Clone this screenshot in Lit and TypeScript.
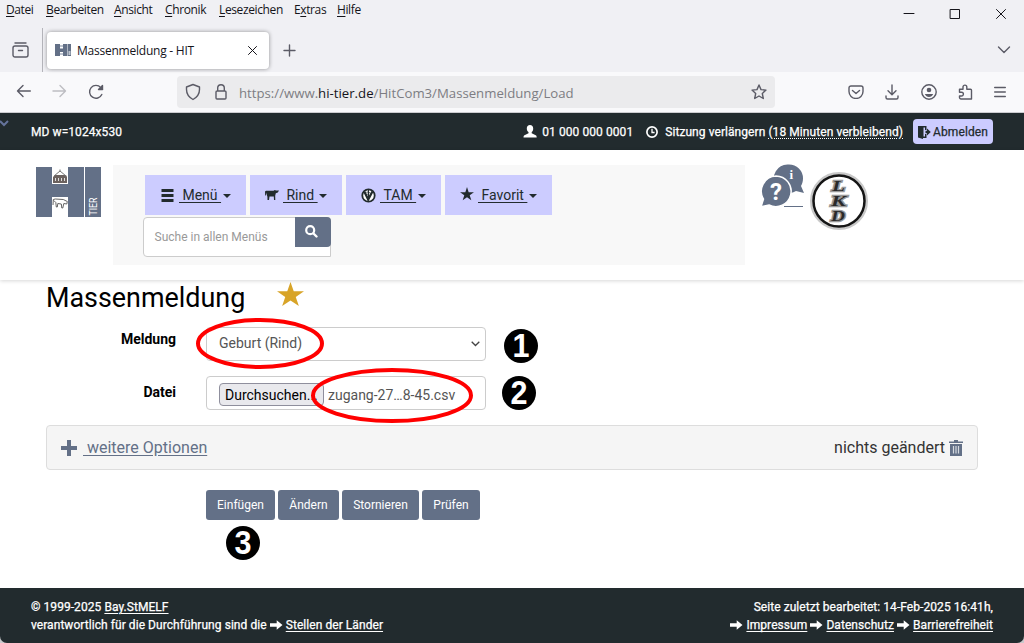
import { LitElement, html, css, svg } from "lit";
import { customElement } from "lit/decorators.js";

const arrow = () => html`<svg class="arrow" width="13" height="10" viewBox="0 0 13 10"><path fill="#fff" d="M0 3.200h6.700V.2L12.500 5 6.700 9.800V6.800H0z" /></svg>`;
const starPath = "M10 0l2.4 7.4H20l-6.1 4.5 2.3 7.3L10 14.700l-6.2 4.500 2.300-7.300L0 7.400h7.600z";

const line = (w: number, h: number, body: unknown, cls = "") =>
  html`<svg class="ln ${cls}" width=${w} height=${h} viewBox="0 0 ${w} ${h}">${body}</svg>`;

@customElement("browser-chrome")
class BrowserChrome extends LitElement {
  static styles = css`
    :host { display: block; font-family: "Open Sans", "Noto Sans", sans-serif; color: #15141a; }
    svg { display: block; flex: none; }
    .ln { fill: none; stroke: #5b5b66; stroke-width: 1.4; stroke-linecap: round; stroke-linejoin: round; }
    .dim { stroke: #bdbdc2; }
    .dark { stroke: #15141a; stroke-width: 1; }
    .top { background: #f0f0f4; height: 72px; display: flex; justify-content: space-between; box-sizing: border-box; }
    .menu { display: flex; height: 22px; padding-left: 6px; font-size: 12px; line-height: 20px; white-space: nowrap; letter-spacing: -0.38px; }
    .menu span { flex: none; }
    .menu b { font-weight: 400; text-decoration: underline; text-underline-offset: 2px; }
    .tabs { display: flex; align-items: center; height: 50px; }
    .recent { margin: 6px 0 0 12px; }
    .sep { width: 1px; height: 44px; margin-left: 13px; align-self: flex-end; background: #b4b4ba; }
    .tab { display: flex; align-items: center; box-sizing: border-box; width: 222px; height: 37px; margin: 6px 0 0 4px; padding: 0 11px 0 8px; background: #fff; border-radius: 4px; box-shadow: 0 0 4px rgba(0, 0, 0, 0.4); font-size: 12px; letter-spacing: -0.23px; }
    .tab span { flex: 1; padding-left: 5px; white-space: nowrap; }
    .plus { margin: 7px 0 0 14px; }
    .win { display: flex; flex-direction: column; align-items: flex-end; padding: 8px 17px 0 0; }
    .ctl { display: flex; gap: 34px; align-items: center; }
    .list { margin: 26px -4px 0 0; }
    .bar { background: #f9f9fb; height: 41px; box-sizing: border-box; border-bottom: 1px solid #ccccd0; display: flex; align-items: center; padding: 0 18px 0 16px; }
    .nav { display: flex; gap: 21px; width: 161px; }
    .url { display: flex; align-items: center; background: #ebebed; border-radius: 4px; width: 598px; height: 32px; box-sizing: border-box; padding: 0 8px; }
    .addr { flex: 1; padding: 1px 0 0 12px; font-size: 13.200px; color: #7d7d83; white-space: nowrap; }
    .addr b { color: #15141a; font-weight: 400; }
    .lock { margin-left: 14px; }
    .tools { display: flex; align-items: center; justify-content: space-between; flex: 1; padding-left: 73px; }
  `;
  render() {
    const items: [string, string, string, number][] = [
      ["", "D", "atei", 40], ["", "B", "earbeiten", 68], ["", "A", "nsicht", 51], ["", "C", "hronik", 54],
      ["", "L", "esezeichen", 75], ["E", "x", "tras", 43], ["", "H", "ilfe", 40],
    ];
    return html`
      <div class="top">
        <div>
          <div class="menu">${items.map((i) => html`<span style="width:${i[3]}px">${i[0]}<b>${i[1]}</b>${i[2]}</span>`)}</div>
          <div class="tabs">
            ${line(17, 16, svg`<path d="M3 1h11M1 6a2 2 0 012-2h11a2 2 0 012 2v7a2 2 0 01-2 2H3a2 2 0 01-2-2zM6.5 8.5h4" />`, "recent")}
            <div class="sep"></div>
            <div class="tab">
              <svg width="17" height="13" viewBox="0 0 17 13"><path fill="#637087" d="M0 0h5v4.500h3V0h4v12H8V8H5v4H0zM12.500 0H16v12h-3.500z" /><path fill="#bcc3ce" d="M5 1h3v2H5zM5 9h3v2H5zM13.500 7h2v4h-2z" /></svg>
              <span>Massenmeldung - HIT</span>
              ${line(11, 11, svg`<path d="M1.500 1.500l8 8m0-8l-8 8" />`, "dark")}
            </div>
            ${line(13, 13, svg`<path d="M6.500 1v11M1 6.500h11" />`, "plus")}
          </div>
        </div>
        <div class="win">
          <div class="ctl">
            ${line(12, 12, svg`<path d="M1 5.500h10" />`, "dark")}
            ${line(12, 12, svg`<path d="M1.500 1.500h9v9h-9z" />`, "dark")}
            ${line(12, 12, svg`<path d="M1.500 1.500l9 9m0-9l-9 9" />`, "dark")}
          </div>
          ${line(14, 8, svg`<path d="M1.500 1l5.500 5.500L12.500 1" />`, "list")}
        </div>
      </div>
      <div class="bar">
        <div class="nav">
          ${line(15, 14, svg`<path d="M14.300 7H1.500M7 1.500L1.500 7 7 12.500" />`)}
          ${line(15, 14, svg`<path d="M1 7h12.500M8 1.500L13.500 7 8 12.500" />`, "dim")}
          ${line(16, 16, svg`<path d="M13.800 10.500A6.400 6.400 0 1112.800 3.600L14.500 5.300" /><path d="M14.500 1.500v4h-4z" fill="#5b5b66" />`)}
        </div>
        <div class="url">
          ${line(16, 18, svg`<path d="M8 1.500L14.500 4v2.500c0 4-2 7.500-6.500 10-4.500-2.500-6.500-6-6.500-10V4z" />`)}
          ${line(12, 16, svg`<path d="M1 8a1 1 0 011-1h8a1 1 0 011 1v6a1 1 0 01-1 1H2a1 1 0 01-1-1zM2.700 7V4a3.300 3.300 0 016.600 0v3" />`, "lock")}
          <div class="addr">https://www.<b>hi-tier.de</b>/HitCom3/Massenmeldung/Load</div>
          ${line(16, 16, svg`<path d="M8 1l2 4.600 5 .5-3.700 3.400 1 5L8 12l-4.300 2.500 1-5L1 6.100l5-.5z" />`)}
        </div>
        <div class="tools">
          ${line(16, 14, svg`<path d="M3 1h10a2 2 0 012 2v3.500a6.500 6.500 0 01-14 0V3a2 2 0 012-2zM4.500 5.500L8 8.500l3.500-3" />`)}
          ${line(14, 16, svg`<path d="M7 1v9.500M3 6.800l4 4 4-4M1 12v1.500A1.500 1.500 0 002.500 15h9a1.500 1.500 0 001.500-1.500V12" />`)}
          ${line(16, 16, svg`<circle cx="8" cy="8" r="7.200" /><circle cx="8" cy="6" r="2.300" fill="#5b5b66" stroke="none" /><path d="M3.800 10h8.400c-.9 2-2.300 3-4.200 3s-3.300-1-4.200-3z" fill="#5b5b66" stroke="none" />`)}
          ${line(15, 16, svg`<path d="M1.500 5.200H5V3a1.900 1.900 0 013.800 0v2.200h3.700a1 1 0 011 1V15H3a1.500 1.500 0 01-1.500-1.500V12h2a1.800 1.800 0 000-3.800h-2z" />`)}
          ${line(12, 12, svg`<path d="M.7 1.500h10.600M.7 6h10.600M.7 10.500h10.600" />`)}
        </div>
      </div>`;
  }
}

@customElement("session-bar")
class SessionBar extends LitElement {
  static styles = css`
    :host { display: flex; height: 37px; background: #222b2e; color: #fff; font: 400 12px/38px Roboto, sans-serif; letter-spacing: 0.07px; -webkit-text-stroke: 0.25px; padding-right: 31px; white-space: nowrap; }
    svg { display: block; flex: none; }
    .tog { margin: 7px 22px 0 0; }
    .size { flex: 1; }
    .user { display: flex; align-items: center; gap: 5px; margin-right: 13px; }
    .time { display: flex; align-items: center; gap: 7px; margin-right: 10px; }
    .dot { text-decoration: underline dotted; text-underline-offset: 2px; }
    .out { display: flex; align-items: center; gap: 2px; box-sizing: border-box; width: 80px; height: 25px; margin-top: 6px; padding: 1px 0 0 5px; background: #ccf; border-radius: 4px; color: #222b2e; line-height: 24px; letter-spacing: 0.12px; }
  `;
  render() {
    return html`
      <svg class="tog" width="9" height="7" viewBox="0 0 9 7"><path d="M0 1l4 4 4-4" fill="none" stroke="#65739b" stroke-width="2" /></svg>
      <span class="size">MD w=1024x530</span>
      <span class="user"><svg width="14" height="13" viewBox="0 0 14 13"><path fill="#fff" d="M7 0c2 0 3.200 1.400 3.200 3.500 0 1.600-.6 2.900-1.500 3.600v1.200l4 1.900c.7.400 1 1 1 2.300H.5c0-1.300.3-1.900 1-2.300l4-1.900V7.100C4.500 6.400 3.800 5.100 3.800 3.500 3.800 1.400 5 0 7 0z" /></svg>01 000 000 0001</span>
      <span class="time"><svg width="12" height="12" viewBox="0 0 12 12"><circle cx="6" cy="6" r="5.100" fill="none" stroke="#fff" stroke-width="1.700" /><path d="M6 2.800V6.500h2.600" fill="none" stroke="#fff" stroke-width="1.300" /></svg><span>Sitzung verlängern <span class="dot">(18 Minuten verbleibend)</span></span></span>
      <span class="out"><svg width="13" height="13" viewBox="0 0 13 13"><path fill="#222b2e" d="M0 0h8.500v4H7V1.500H5.500v9H7V8h1.500v4H5v1L0 11.500zM7.500 4.800H9V2.500L12.800 6 9 9.500V7.200H7.500z" /></svg>Abmelden</span>`;
  }
}

@customElement("site-header")
class SiteHeader extends LitElement {
  static styles = css`
    :host { display: flex; height: 130px; box-sizing: border-box; padding: 15px 0 0 36px; background: #fff; box-shadow: 0 1px 4px rgba(0, 0, 0, 0.16); font-family: Roboto, sans-serif; z-index: 1; }
    svg { display: block; flex: none; }
    .logo { margin: 2px 12px 0 0; }
    .logo text { font: 11px Roboto, sans-serif; fill: #fff; }
    .panel { width: 632px; height: 100px; background: #f8f8f8; box-sizing: border-box; padding: 10px 0 0 30px; }
    .row { display: flex; gap: 4px; padding-left: 2px; }
    .item { display: flex; align-items: center; box-sizing: border-box; height: 40px; padding-left: 15px; background: #ccf; color: #222b2e; font-size: 14px; }
    .item span { text-decoration: underline; text-underline-offset: 2px; white-space: pre; margin-left: 4px; }
    .caret { margin: 2px 0 0 1.500px; }
    .search { display: flex; box-sizing: border-box; width: 188px; height: 40px; margin-top: 2px; border: 1px solid #ccc; border-radius: 4px 4px 0 4px; background: #fff; }
    .ph { flex: 1; padding-left: 10.500px; font-size: 12px; line-height: 38px; color: #999; }
    .go { width: 36px; height: 30px; margin: -1px -1px 0 0; border-radius: 0 4px 4px 0; background: #637087; display: flex; justify-content: center; padding: 8px 3px 0 0; box-sizing: border-box; }
    .help { margin: -2px 0 0 16px; }
    .help text { fill: #fff; }
    .q { font: 700 24px Roboto, sans-serif; }
    .i { font: 700 13px "Liberation Serif", serif; }
    .lkd { margin: 7px 0 0 4px; }
    .lkd text { font: italic 700 15px "Liberation Serif", serif; fill: #2a2a2a; stroke: #999; stroke-width: 2.500px; paint-order: stroke; }
  `;
  render() {
    const caret = html`<svg class="caret" width="8" height="4" viewBox="0 0 8 4"><path fill="#222b2e" d="M0 0h8L4 4z" /></svg>`;
    const bars = html`<svg width="15" height="13" viewBox="0 0 15 13"><path fill="#222b2e" d="M1.500 0h12v3h-12zM1.500 5h12v3h-12zM1.500 10h12v3h-12z" /></svg>`;
    const cow = html`<svg width="14" height="12" viewBox="0 0 14 12"><path fill="#222b2e" d="M0 2.600l1-.8h7.500L9.800 1l1.200.4 3 .2-1.200 2-2 .6-.6 2.600.1 4.200H9l-.2-3.500H4.500L4 11H2.500L2.400 7.800 1.500 5 1.300 3.500.9 6.500H.2z" /></svg>`;
    const vet = html`<svg width="15" height="15" viewBox="0 0 15 15"><circle cx="7.500" cy="7.500" r="6.200" fill="#fff" stroke="#222b2e" stroke-width="1.800" /><path d="M3.400 3.800L7.200 11.500l4.200-8" fill="none" stroke="#222b2e" stroke-width="2.300" /><path d="M7.500 2v7M5.500 4.300c3.500-1 4 1 .7 2" fill="none" stroke="#222b2e" /></svg>`;
    const star = html`<svg width="14" height="16" viewBox="0 0 20 23"><path fill="#222b2e" d=${starPath} /></svg>`;
    return html`
      <svg class="logo" width="65" height="50" viewBox="0 0 65 50">
        <path fill="#637087" d="M0 0h65v50H0z" />
        <path fill="#fff" d="M16 0h16v17H16zM16 30h16v20H16zM48 0h1v50h-1z" />
        <path fill="#6c625f" d="M17 10l2-2h11l1 2v6H17z" />
        <path fill="none" stroke="#777" d="M18 9l6-5 6 5M24 4.500V2.500" />
        <path stroke="#ddd" d="M19.500 11v3m3-3v3m3-3v3m3-3v3" />
        <path fill="#fff" stroke="#555" stroke-width=".9" d="M17 38l.3-5.500 2-.5 8 .500 4 2-.5 2.500-3-.5-1 4.500h-1l-.5-4-3.500-.5-.5 3.500h-1l-.5-4.500-2-2" />
        <text transform="translate(61 48.500) rotate(-90)" textLength="18" lengthAdjust="spacingAndGlyphs">TIER</text>
      </svg>
      <div class="panel">
        <div class="row">
          <div class="item" style="width:101px">${bars}<span>&nbsp;Menü&nbsp;</span>${caret}</div>
          <div class="item" style="width:92px">${cow}<span>&nbsp;Rind&nbsp;</span>${caret}</div>
          <div class="item" style="width:95px">${vet}<span>&nbsp;TAM&nbsp;</span>${caret}</div>
          <div class="item" style="width:107px">${star}<span>&nbsp;Favorit&nbsp;</span>${caret}</div>
        </div>
        <div class="search"><span class="ph">Suche in allen Menüs</span><span class="go"><svg width="13" height="13" viewBox="0 0 13 13"><circle cx="5.200" cy="5.200" r="4" fill="none" stroke="#fff" stroke-width="2.200" /><path d="M8.500 8.500l3 3" stroke="#fff" stroke-width="2.400" stroke-linecap="round" /></svg></span></div>
      </div>
      <svg class="help" width="44" height="45" viewBox="0 0 44 45">
        <path fill="#637087" d="M28 1.500a14 14 0 0114 14c0 3-1 5.500-2 7.500l3 7-8-2a14 14 0 01-20-5 14 14 0 0113-21.500z" />
        <path fill="#637087" stroke="#fff" stroke-width="1.500" d="M15 13a15.300 15.300 0 11-7 29l-8 1.700 2.500-7.500A15.300 15.300 0 0115 13z" />
        <path d="M23 43.500h19" stroke="#637087" />
        <text class="q" x="9" y="37">?</text><text class="i" x="28.500" y="16">i</text>
      </svg>
      <svg class="lkd" width="60" height="60" viewBox="0 0 60 60">
        <circle cx="30" cy="29" r="27" fill="#fff" stroke="#c8c8c8" stroke-width="4" /><circle cx="30" cy="29" r="25.500" fill="none" stroke="#151515" stroke-width="2.500" />
        <text x="23" y="18.500" textLength="13" lengthAdjust="spacingAndGlyphs">L</text><text x="22" y="33.500" textLength="15" lengthAdjust="spacingAndGlyphs">K</text><text x="22" y="49" textLength="14" lengthAdjust="spacingAndGlyphs">D</text>
      </svg>`;
  }
}

@customElement("report-form")
class ReportForm extends LitElement {
  static styles = css`
    :host { display: block; position: relative; height: 308px; box-sizing: border-box; padding: 1px 46px 0; background: #fff; font-family: Roboto, sans-serif; color: #000; white-space: nowrap; }
    svg { display: block; flex: none; }
    .head { display: flex; height: 33px; font-size: 26.900px; line-height: 35px; }
    .head svg { margin: 1px 0 0 32px; }
    .field { display: flex; margin-top: 13px; }
    .field + .field { margin-top: 15px; }
    .label { width: 130px; text-align: right; font-size: 14px; font-weight: 700; line-height: 25px; margin-right: 30px; }
    .low { line-height: 33px; }
    .box { display: flex; align-items: center; width: 280px; height: 34px; box-sizing: border-box; border: 1px solid #ccc; border-radius: 4px; padding: 0 5px 0 12px; font-size: 14px; color: #555; }
    .val { flex: 1; padding-bottom: 2px; }
    .browse { box-sizing: border-box; width: 105px; height: 23px; margin: 2px 4px 0 0; border: 1px solid #8f8f9d; border-radius: 4px; background: #e9e9ed; color: #000; line-height: 22px; padding-left: 5px; overflow: hidden; }
    .file { padding-top: 3px; font-size: 14px; }
    .opts { display: flex; align-items: center; box-sizing: border-box; height: 45px; margin: 15px 0 20px; padding: 0 14px; background: #f5f5f5; border: 1px solid #ddd; border-radius: 4px; font-size: 16px; }
    .opts a { flex: 1; color: #637087; text-decoration: underline; text-underline-offset: 2px; margin-left: 6px; }
    .state { color: #333; margin-right: 4px; }
    .acts { display: flex; gap: 3px; padding-left: 160px; }
    .btn { height: 30px; border-radius: 3px; background: #637087; color: #fff; font-size: 12px; line-height: 30px; text-align: center; }
    .marks { position: absolute; left: 0; top: 0; }
    .marks text { font: 700 33px "Liberation Sans", sans-serif; fill: #fff; }
  `;
  render() {
    const marks: [number, number, string][] = [[521, 66, "1"], [519, 113, "2"], [243, 263, "3"]];
    return html`
      <div class="head">Massenmeldung<svg width="27" height="24" viewBox="0 0 20 19.200" preserveAspectRatio="none"><path fill="#d8a428" d=${starPath} /></svg></div>
      <div class="field"><span class="label">Meldung</span><div class="box"><span class="val">Geburt (Rind)</span><svg width="9" height="6" viewBox="0 0 9 6"><path d="M.7.700l3.800 3.800L8.300.7" fill="none" stroke="#444" stroke-width="1.300" /></svg></div></div>
      <div class="field"><span class="label low">Datei</span><div class="box"><span class="browse">Durchsuchen...</span><span class="file">zugang-27…8-45.csv</span></div></div>
      <div class="opts">
        <svg width="16" height="16" viewBox="0 0 16 16"><path fill="#637087" d="M6 0h4v6h6v4h-6v6H6v-6H0V6h6z" /></svg>
        <a>&nbsp;weitere Optionen</a><span class="state">nichts geändert</span>
        <svg width="14" height="16" viewBox="0 0 14 16"><path fill="#637087" d="M5 0h4v1.500h5V3H0V1.500h5zM1 4h12v12H1z" /><path d="M4.500 6v7.500M7 6v7.500M9.500 6v7.500" stroke="#d5d9df" stroke-width="1.200" /></svg>
      </div>
      <div class="acts"><span class="btn" style="width:69px">Einfügen</span><span class="btn" style="width:61px">Ändern</span><span class="btn" style="width:77px">Stornieren</span><span class="btn" style="width:58px">Prüfen</span></div>
      <svg class="marks" width="600" height="308" viewBox="0 0 600 308">
        <g fill="none" stroke="#f00" stroke-width="4"><ellipse cx="260" cy="63.500" rx="62" ry="23.500" /><ellipse cx="392" cy="115.500" rx="79" ry="25.500" /></g>
        ${marks.map((m) => svg`<circle cx=${m[0]} cy=${m[1]} r="17" /><text x=${m[0] - 8.5} y=${m[1] + 11} textLength="17" lengthAdjust="spacingAndGlyphs">${m[2]}</text>`)}
      </svg>`;
  }
}

@customElement("site-footer")
class SiteFooter extends LitElement {
  static styles = css`
    :host { display: flex; justify-content: space-between; box-sizing: border-box; height: 55px; padding: 10px 31px 0; background: #222b2e; color: #fff; font: 400 12px/18px Roboto, sans-serif; letter-spacing: 0.06px; -webkit-text-stroke: 0.25px; white-space: nowrap; border-radius: 0 0 7px 7px; }
    a { text-decoration: underline; text-underline-offset: 2px; }
    .right { text-align: right; }
    .arrow { vertical-align: -1px; }
  `;
  render() {
    return html`
      <div>© 1999-2025 <a>Bay.StMELF</a><br />verantwortlich für die Durchführung sind die ${arrow()} <a>Stellen der Länder</a></div>
      <div class="right">Seite zuletzt bearbeitet: 14-Feb-2025 16:41h,<br />${arrow()} <a>Impressum</a> ${arrow()} <a>Datenschutz</a> ${arrow()} <a>Barrierefreiheit</a></div>`;
  }
}

@customElement("app-root")
class AppRoot extends LitElement {
  static styles = css`
    :host { display: flex; flex-direction: column; width: 1024px; height: 643px; overflow: hidden; background: #c9c9cc; }
    site-header { position: relative; }
  `;
  render() {
    return html`<browser-chrome></browser-chrome><session-bar></session-bar><site-header></site-header><report-form></report-form><site-footer></site-footer>`;
  }
}
